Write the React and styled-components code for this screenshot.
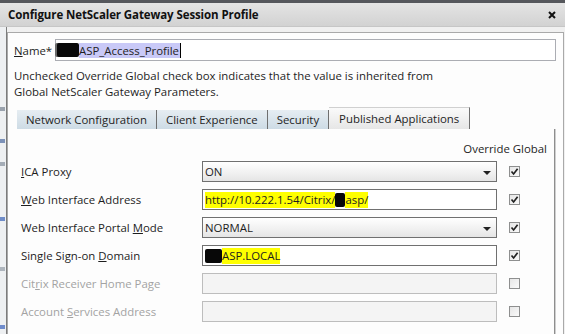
import React from "react";
import styled, { createGlobalStyle } from "styled-components";

const GlobalStyle = createGlobalStyle`
  html, body {
    margin: 0;
    padding: 0;
    background: #f0f0f0;
  }
  body {
    font-family: "Open Sans", "Noto Sans", sans-serif;
    font-size: 11.4px;
    color: #1e1e1e;
  }
`;

const rows = [
  { label: "ICA Proxy", key: 0, kind: "select", value: "ON", checked: true },
  { label: "Web Interface Address", key: 0, kind: "url", checked: true },
  { label: "Web Interface Portal Mode", key: 21, kind: "select", value: "NORMAL", checked: true },
  { label: "Single Sign-on Domain", key: 15, kind: "domain", checked: true },
  { label: "Citrix Receiver Home Page", key: 3, kind: "text", disabled: true },
  { label: "Account Services Address", key: 8, kind: "text", disabled: true },
];

function AccessLabel({ text, at }) {
  return (
    <>
      {text.slice(0, at)}
      <u>{text[at]}</u>
      {text.slice(at + 1)}
    </>
  );
}

function Field({ row }) {
  if (row.kind === "select") {
    return (
      <SelectBox>
        <span>{row.value}</span>
        <Arrow />
      </SelectBox>
    );
  }
  if (row.kind === "url") {
    return (
      <TextBox>
        <Marked>http://10.222.1.54/Citrix/</Marked>
        <Redact $w={10} />
        <Marked>asp/</Marked>
      </TextBox>
    );
  }
  if (row.kind === "domain") {
    return (
      <TextBox>
        <Redact $w={17} />
        <Marked>ASP.LOCAL</Marked>
      </TextBox>
    );
  }
  return <TextBox $disabled />;
}

export default function App() {
  return (
    <>
      <GlobalStyle />
      <Screen>
        <TopEdge />
        <TitleBar>
          <Title>Configure NetScaler Gateway Session Profile</Title>
          <Close viewBox="0 0 8 8">
            <path d="M1 1L7 7M7 1L1 7" stroke="#111" strokeWidth="2" />
          </Close>
        </TitleBar>
        <Body>
          <BackWindow>
            <Blip $top={80} $c="#9aa2ad" />
            <Blip $top={112} $c="#7d92b8" />
            <Blip $top={135} $c="#a4acb6" />
            <Blip $top={190} $c="#6f8cc8" />
            <Blip $top={240} $c="#aeb5bd" />
            <Blip $top={298} $c="#6f8ccc" />
          </BackWindow>
          <ContentBox>
            <NameRow>
              <NameLabel>
                <AccessLabel text="Name*" at={0} />
              </NameLabel>
              <NameInput>
                <Redact $w={22} $dark />
                <Selected>ASP_Access_Profile</Selected>
                <Caret />
              </NameInput>
            </NameRow>
            <Hint>
              Unchecked Override Global check box indicates that the value is inherited from
              <br />
              Global NetScaler Gateway Parameters.
            </Hint>
            <TabStrip>
              <Tab>Network Configuration</Tab>
              <Tab>Client Experience</Tab>
              <Tab>Security</Tab>
              <Tab $active>Published Applications</Tab>
            </TabStrip>
            <Panel>
              <OverrideHead>Override Global</OverrideHead>
              <Rows>
                {rows.map((row) => (
                  <Row key={row.label}>
                    <RowLabel $disabled={row.disabled}>
                      <AccessLabel text={row.label} at={row.key} />
                    </RowLabel>
                    <Field row={row} />
                    <Check>
                      {row.checked && (
                        <svg viewBox="0 0 9 9" width="9" height="9">
                          <path d="M1.5 4.5L3.6 7L7.6 1.8" fill="none" stroke="#222" strokeWidth="1.7" />
                        </svg>
                      )}
                    </Check>
                  </Row>
                ))}
              </Rows>
            </Panel>
          </ContentBox>
        </Body>
      </Screen>
    </>
  );
}

const Screen = styled.div`
  width: 565px;
  height: 334px;
  overflow: hidden;
  display: flex;
  flex-direction: column;
  background: #f0f0f0;
`;

const TopEdge = styled.div`
  flex-shrink: 0;
  height: 3px;
  background: #55575c;
`;

const TitleBar = styled.div`
  flex-shrink: 0;
  height: 24px;
  box-sizing: border-box;
  display: flex;
  align-items: center;
  justify-content: space-between;
  padding: 0 8px 0 8px;
  background: linear-gradient(#e4e4e4, #d2d2d2);
  border-bottom: 1px solid #c6c6c6;
`;

const Title = styled.div`
  font-weight: 700;
  font-size: 11.5px;
  color: #111;
  letter-spacing: -0.1px;
`;

const Close = styled.svg`
  width: 8px;
  height: 8px;
  margin-right: 1px;
`;

const Body = styled.div`
  flex: 1;
  min-height: 0;
  display: flex;
  padding-top: 5px;
`;

const BackWindow = styled.div`
  width: 6px;
  margin-top: -5px;
  position: relative;
  background: #eef0f2;
  border-right: 1px solid #7c7c7c;
`;

const Blip = styled.div`
  position: absolute;
  left: 0;
  top: ${(p) => p.$top}px;
  width: 5px;
  height: 4px;
  background: ${(p) => p.$c};
`;

const ContentBox = styled.div`
  flex: 1;
  margin-right: 1px;
  border: 1px solid #a9a9a9;
  border-bottom: none;
  background: #fdfdfd;
  padding: 6px 7px 0 6px;
`;

const NameRow = styled.div`
  display: flex;
  align-items: center;
  height: 22px;
`;

const NameLabel = styled.div`
  width: 41px;
`;

const NameInput = styled.div`
  flex: 1;
  height: 20px;
  border: 1px solid #abadb3;
  background: #fff;
  display: flex;
  align-items: center;
`;

const Selected = styled.span`
  background: #c9c9f7;
  line-height: 15px;
  padding-right: 1px;
`;

const Caret = styled.span`
  width: 1px;
  height: 15px;
  background: #000;
`;

const Redact = styled.span`
  display: inline-block;
  width: ${(p) => p.$w}px;
  height: 14px;
  background: #080808;
  border-radius: 2px;
  box-shadow: ${(p) => (p.$dark ? "-2px 0 0 #6a6a6a" : "none")};
  margin-left: ${(p) => (p.$dark ? "1px" : "0")};
`;

const Hint = styled.div`
  margin-top: 7px;
  line-height: 16px;
`;

const TabStrip = styled.div`
  display: flex;
  align-items: flex-end;
  height: 22px;
  margin-top: 7px;
  padding-left: 3px;
`;

const Tab = styled.div`
  height: ${(p) => (p.$active ? "22px" : "19px")};
  padding: 0 ${(p) => (p.$active ? "10px" : "9px")};
  display: flex;
  align-items: center;
  background: ${(p) => (p.$active ? "linear-gradient(#fafafa, #e6e6e6)" : "linear-gradient(#e6edf2, #cddbe5)")};
  border-right: 1px solid #6f6f6f;
  border-top: ${(p) => (p.$active ? "1px solid #d0d0d0" : "none")};
  box-sizing: border-box;
  white-space: nowrap;
`;

const Panel = styled.div`
  margin-left: 3px;
  margin-right: 1px;
  height: 220px;
  border-right: 1px solid #8e8e8e;
  box-shadow: 1px 0 0 #cfcfcf;
  padding: 12px 7px 0 4px;
`;

const OverrideHead = styled.div`
  text-align: right;
  line-height: 16px;
`;

const Rows = styled.div`
  display: flex;
  flex-direction: column;
  gap: 7px;
  margin-top: 4px;
`;

const Row = styled.div`
  display: flex;
  align-items: center;
  height: 21px;
`;

const RowLabel = styled.div`
  width: 181px;
  color: ${(p) => (p.$disabled ? "#a3a3a3" : "#1e1e1e")};
`;

const boxBase = `
  width: 295px;
  height: 21px;
  box-sizing: border-box;
  display: flex;
  align-items: center;
  padding-left: 2px;
`;

const TextBox = styled.div`
  ${boxBase}
  border: 1px solid ${(p) => (p.$disabled ? "#bdbdbd" : "#707070")};
  background: ${(p) => (p.$disabled ? "#f4f4f4" : "#fff")};
`;

const SelectBox = styled.div`
  ${boxBase}
  justify-content: space-between;
  padding-right: 5px;
  border: 1px solid #707070;
  background: linear-gradient(#ffffff, #f0f0f0 60%, #e5e5e5);
`;

const Arrow = styled.span`
  width: 0;
  height: 0;
  border-left: 4px solid transparent;
  border-right: 4px solid transparent;
  border-top: 4px solid #222;
  margin-top: 2px;
`;

const Marked = styled.span`
  background: #ffff00;
  line-height: 16px;
`;

const Check = styled.div`
  width: 11px;
  height: 11px;
  box-sizing: border-box;
  margin-left: 12px;
  border: 1px solid #8e8f8f;
  background: linear-gradient(135deg, #e6e6e6, #fafafa);
  display: flex;
  align-items: center;
  justify-content: center;
`;
